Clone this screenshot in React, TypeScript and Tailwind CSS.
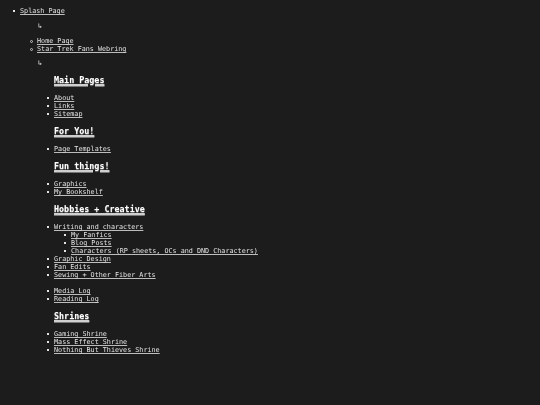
import React from "react";

const A = ({ children }: { children: React.ReactNode }) => (
  <a href="#" className="text-[#e2e2e2] underline decoration-[#bdbdbd]">
    {children}
  </a>
);

const H = ({ children }: { children: React.ReactNode }) => (
  <h2 className="ml-[54px] mt-[8px] mb-[8px] text-[8.4px] leading-[11px] font-bold text-white underline decoration-[1.5px] decoration-[#cfcfcf] [text-shadow:0_1px_1px_#777]">
    {children}
  </h2>
);

const disc =
  "relative before:content-[''] before:absolute before:left-[-7px] before:top-[3px] before:w-[2px] before:h-[2px] before:bg-[#e2e2e2]";
const circ =
  "relative before:content-[''] before:absolute before:left-[-7px] before:top-[2.5px] before:w-[3px] before:h-[3px] before:rounded-full before:border before:border-[#c4c4c4]";

const Li = ({ children, c = disc }: { children: React.ReactNode; c?: string }) => (
  <li className={c}>{children}</li>
);

const L = ({ items }: { items: React.ReactNode[] }) => (
  <ul className="list-none pl-[54px] my-0">
    {items.map((t, i) => (
      <Li key={i}>{t}</Li>
    ))}
  </ul>
);

export default function App() {
  return (
    <div
      className="min-h-[405px] w-[540px] bg-[#1c1c1c] text-[#e2e2e2] text-[6.75px] leading-[8px] pt-[7px] pb-[40px] [will-change:transform] [text-shadow:0_0_0.01px_rgba(0,0,0,0.01)]"
      style={{ fontFamily: '"DejaVu Sans Mono", monospace' }}
    >
      <ul className="list-none pl-[20px] m-0">
        <Li>
          <A>Splash Page</A>
        </Li>
      </ul>
      <p className="ml-[38px] mt-[7px] mb-[7px] text-white">↳</p>
      <ul className="list-none pl-[37px] m-0">
        <Li c={circ}>
          <A>Home Page</A>
        </Li>
        <Li c={circ}>
          <A>Star Trek Fans Webring</A>
        </Li>
      </ul>
      <p className="ml-[38px] mt-[6px] mb-[8px] text-white">↳</p>
      <H>Main Pages</H>
      <L items={[<A>About</A>, <A>Links</A>, <A>Sitemap</A>]} />
      <H>For You!</H>
      <L items={[<A>Page Templates</A>]} />
      <H>Fun things!</H>
      <L items={[<A>Graphics</A>, <A>My Bookshelf</A>]} />
      <H>Hobbies + Creative</H>
      <ul className="list-none pl-[54px] my-0">
        <Li>
          <A>Writing and characters</A>
          <ul className="list-none pl-[17px] m-0">
            <Li>
              <A>My Fanfics</A>
            </Li>
            <Li>
              <A>Blog Posts</A>
            </Li>
            <Li>
              <A>Characters (RP sheets, OCs and DND Characters)</A>
            </Li>
          </ul>
        </Li>
        <Li>
          <A>Graphic Design</A>
        </Li>
        <Li>
          <A>Fan Edits</A>
        </Li>
        <Li>
          <A>Sewing + Other Fiber Arts</A>
        </Li>
      </ul>
      <div className="h-[8px]" />
      <L items={[<A>Media Log</A>, <A>Reading Log</A>]} />
      <H>Shrines</H>
      <L
        items={[
          <A>Gaming Shrine</A>,
          <A>Mass Effect Shrine</A>,
          <A>Nothing But Thieves Shrine</A>,
        ]}
      />
    </div>
  );
}
